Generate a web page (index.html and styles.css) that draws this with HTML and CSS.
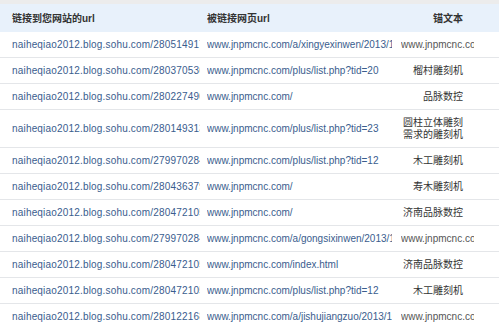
FILE: index.html
```html
<!DOCTYPE html>
<html>
<head>
<meta charset="utf-8">
<link rel="stylesheet" href="styles.css">
</head>
<body>
<div class="topbar"></div>
<div class="table">
  <div class="row head">
    <div class="c1">链接到您网站的url</div>
    <div class="c2">被链接网页url</div>
    <div class="c3">锚文本</div>
  </div>
  <div class="row">
    <div class="c1 link">naiheqiao2012.blog.sohu.com/280514917000</div>
    <div class="c2 link">www.jnpmcnc.com/a/xingyexinwen/2013/1030/123.html</div>
    <div class="c3 url">www.jnpmcnc.com</div>
  </div>
  <div class="row">
    <div class="c1 link">naiheqiao2012.blog.sohu.com/280370536000</div>
    <div class="c2 link">www.jnpmcnc.com/plus/list.php?tid=20</div>
    <div class="c3">榴村雕刻机</div>
  </div>
  <div class="row">
    <div class="c1 link">naiheqiao2012.blog.sohu.com/280227490000</div>
    <div class="c2 link">www.jnpmcnc.com/</div>
    <div class="c3">品脉数控</div>
  </div>
  <div class="row">
    <div class="c1 link">naiheqiao2012.blog.sohu.com/280149313000</div>
    <div class="c2 link">www.jnpmcnc.com/plus/list.php?tid=23</div>
    <div class="c3">圆柱立体雕刻<br>需求的雕刻机</div>
  </div>
  <div class="row">
    <div class="c1 link">naiheqiao2012.blog.sohu.com/279970284000</div>
    <div class="c2 link">www.jnpmcnc.com/plus/list.php?tid=12</div>
    <div class="c3">木工雕刻机</div>
  </div>
  <div class="row">
    <div class="c1 link">naiheqiao2012.blog.sohu.com/280436379000</div>
    <div class="c2 link">www.jnpmcnc.com/</div>
    <div class="c3">寿木雕刻机</div>
  </div>
  <div class="row">
    <div class="c1 link">naiheqiao2012.blog.sohu.com/280472105000</div>
    <div class="c2 link">www.jnpmcnc.com/</div>
    <div class="c3">济南品脉数控</div>
  </div>
  <div class="row">
    <div class="c1 link">naiheqiao2012.blog.sohu.com/279970284000</div>
    <div class="c2 link">www.jnpmcnc.com/a/gongsixinwen/2013/1029/120.html</div>
    <div class="c3 url">www.jnpmcnc.com</div>
  </div>
  <div class="row">
    <div class="c1 link">naiheqiao2012.blog.sohu.com/280472105000</div>
    <div class="c2 link">www.jnpmcnc.com/index.html</div>
    <div class="c3">济南品脉数控</div>
  </div>
  <div class="row">
    <div class="c1 link">naiheqiao2012.blog.sohu.com/280472105000</div>
    <div class="c2 link">www.jnpmcnc.com/plus/list.php?tid=12</div>
    <div class="c3">木工雕刻机</div>
  </div>
  <div class="row">
    <div class="c1 link">naiheqiao2012.blog.sohu.com/280122168000</div>
    <div class="c2 link">www.jnpmcnc.com/a/jishujiangzuo/2013/1028/118.html</div>
    <div class="c3 url">www.jnpmcnc.com</div>
  </div>
</div>
</body>
</html>
```
FILE: styles.css
```css
html, body {
  margin: 0;
  padding: 0;
  background: #ffffff;
}
body {
  font-family: "Liberation Sans", Arial, "Noto Sans CJK SC", sans-serif;
  font-size: 10px;
  line-height: 12px;
  color: #333333;
  width: 499px;
  overflow: hidden;
}
.topbar {
  height: 4px;
  background: #ececec;
}
.table {
  display: flex;
  flex-direction: column;
}
.row {
  display: grid;
  grid-template-columns: 200px 185px 75px;
  column-gap: 7px;
  align-items: center;
  min-height: 26px;
  box-sizing: border-box;
  padding: 7px 0 6px;
  border-bottom: 1px solid #e4e6e9;
}
.row.head {
  background: #e8f1fb;
  min-height: 28px;
  border-bottom: none;
  font-weight: bold;
  color: #333333;
}
.c1, .c2, .c3 {
  white-space: nowrap;
  overflow: hidden;
}
.c1 {
  padding-left: 12px;
}
.c1.link {
  letter-spacing: 0.18px;
}
.c2 {
  padding-left: 0;
}
.c3 {
  text-align: right;
  padding-right: 11px;
  margin-left: 2px;
}
.link {
  color: #3a5d8e;
}
.url {
  color: #555555;
  text-align: left;
}
```
